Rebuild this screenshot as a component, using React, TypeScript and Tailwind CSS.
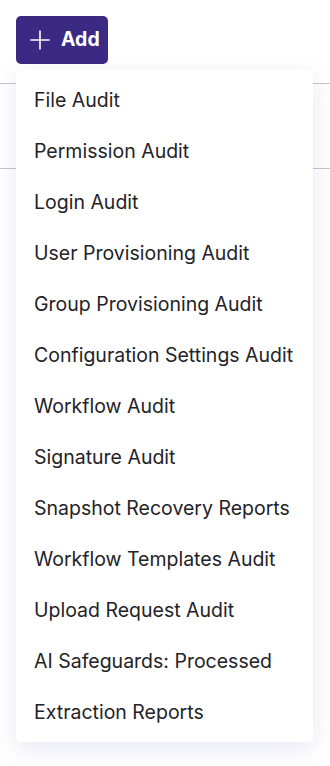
const ITEMS = [
  "File Audit",
  "Permission Audit",
  "Login Audit",
  "User Provisioning Audit",
  "Group Provisioning Audit",
  "Configuration Settings Audit",
  "Workflow Audit",
  "Signature Audit",
  "Snapshot Recovery Reports",
  "Workflow Templates Audit",
  "Upload Request Audit",
  "AI Safeguards: Processed",
  "Extraction Reports",
];

export default function App() {
  return (
    <div className="relative h-[766px] w-[330px] overflow-hidden bg-white font-['Inter',sans-serif]">
      <div className="px-4 pt-4">
        <button className="flex h-12 w-[92px] items-center gap-[11px] rounded-[5px] bg-[#3a2a84] pl-[14px] text-[19.5px] font-bold text-white">
          <svg viewBox="0 0 20 20" className="h-5 w-5" fill="none" stroke="currentColor" strokeWidth={1.6} strokeLinecap="round">
            <path d="M10 1v18M1 10h18" />
          </svg>
          Add
        </button>
      </div>

      {/* table behind the menu */}
      <div className="mt-[19px]">
        <div className="h-[85px] border-t border-[#c4c4cc]" />
        <div className="border-t border-[#c4c4cc]" />
      </div>

      <div className="absolute left-4 top-[70px] w-[297px] rounded-[5px] bg-white pt-[5.5px] pb-[3.5px] shadow-[0_6px_22px_rgba(70,60,170,0.13)]">
        {ITEMS.map((label) => (
          <div
            key={label}
            className="flex h-[51px] items-center px-[18px] text-[19.5px] text-[#232327]"
          >
            {label}
          </div>
        ))}
      </div>
    </div>
  );
}
